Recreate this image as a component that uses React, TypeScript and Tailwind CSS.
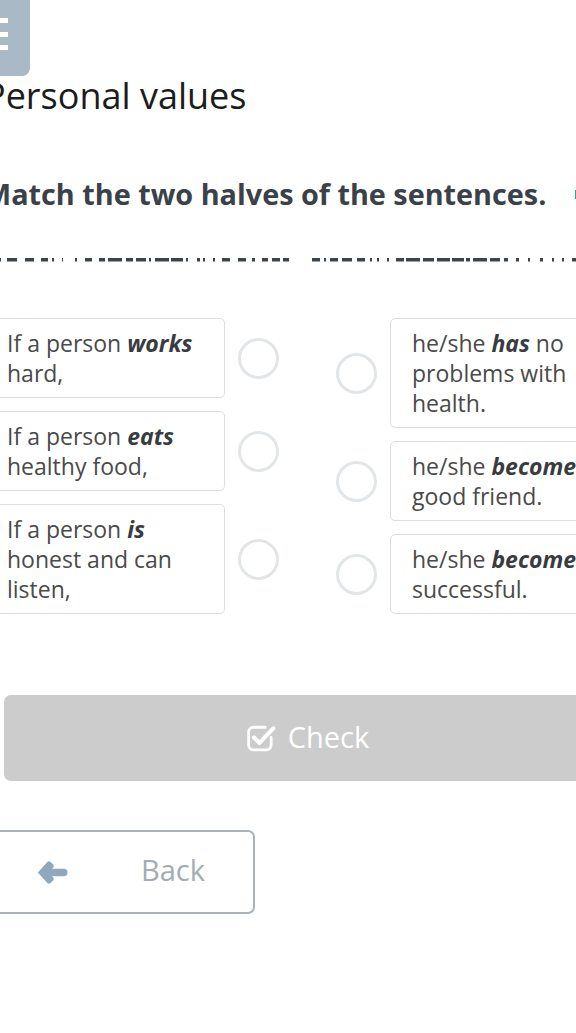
// dash segments of the dotted rule under the task, [start, end] in px
const dashes: [number, number][] = [
  [0, 1], [7, 17], [25, 34], [41, 48], [52, 54], [62, 63], [75, 77], [85, 92],
  [99, 105], [108, 122], [126, 133], [136, 146], [149, 151], [155, 169],
  [171, 183], [186, 188], [197, 200], [203, 205], [213, 215], [222, 230],
  [238, 246], [252, 255], [262, 268], [272, 280], [283, 289],
  [312, 320], [324, 326], [330, 338], [342, 352], [357, 365], [370, 372],
  [377, 379], [387, 389], [396, 404], [406, 420], [423, 434], [437, 450],
  [452, 464], [466, 470], [473, 487], [490, 500], [504, 508], [516, 519],
  [528, 530], [540, 543], [552, 554], [562, 564], [572, 576],
];

type Part = { text: string; bold?: boolean };

const leftItems: Part[][] = [
  [{ text: "If a person " }, { text: "works", bold: true }, { text: " hard," }],
  [{ text: "If a person " }, { text: "eats", bold: true }, { text: " healthy food," }],
  [{ text: "If a person " }, { text: "is", bold: true }, { text: " honest and can listen," }],
];

const rightItems: Part[][] = [
  [{ text: "he/she " }, { text: "has", bold: true }, { text: " no problems with health." }],
  [{ text: "he/she " }, { text: "becomes", bold: true }, { text: " a good friend." }],
  [{ text: "he/she " }, { text: "becomes", bold: true }, { text: " successful." }],
];

function Sentence({ parts }: { parts: Part[] }) {
  return (
    <p>
      {parts.map((p, i) =>
        p.bold ? (
          <b key={i} className="font-bold italic text-[#383c40]">
            {p.text}
          </b>
        ) : (
          <span key={i}>{p.text}</span>
        )
      )}
    </p>
  );
}

function Card({ parts, width }: { parts: Part[]; width: string }) {
  return (
    <div
      className={`${width} shrink-0 rounded-[5px] border border-[#dcdfe2] px-[21px] py-[9px] text-[23px] leading-[30px] text-[#4a4a4a]`}
    >
      <Sentence parts={parts} />
    </div>
  );
}

function Radio() {
  return (
    <div className="h-[41px] w-[41px] shrink-0 rounded-full border-[3.5px] border-[#e3e6e8] bg-white" />
  );
}

function CheckSquareIcon() {
  return (
    <svg width="29" height="28" viewBox="0 0 27 26" fill="none">
      <path
        d="M17 3H6A4.5 4.5 0 0 0 1.5 7.5v12A4.5 4.5 0 0 0 6 24h12A4.5 4.5 0 0 0 22.5 19.5v-7"
        stroke="white"
        strokeWidth="2.6"
        strokeLinecap="round"
      />
      <path
        d="M6.5 12.5l5 5L24.5 4"
        stroke="white"
        strokeWidth="3.8"
        strokeLinecap="round"
        strokeLinejoin="round"
      />
    </svg>
  );
}

function ArrowLeftIcon() {
  return (
    <svg width="31" height="25" viewBox="0 0 30 24" fill="#90a8bb">
      <path d="M0.8 12 L10 1.8 Q11.6 0.2 13.2 1.8 L15.6 4.2 Q17.2 5.8 15.6 7.4 L14.2 8.3 H26 Q29.5 8.3 29.5 12 Q29.5 15.7 26 15.7 H14.2 L15.6 16.6 Q17.2 18.2 15.6 19.8 L13.2 22.2 Q11.6 23.8 10 22.2 Z" />
    </svg>
  );
}

export default function App() {
  return (
    <div className="relative min-h-[1033px] w-[576px] overflow-hidden bg-white font-['Open_Sans','Liberation_Sans',sans-serif]">
      {/* Menu toggle */}
      <div className="-ml-[36px] flex h-[76px] w-[66px] flex-col gap-[8.5px] rounded-b-[8px] bg-[#a9b9c5] pl-[22px] pt-[18px]">
        <span className="h-[5px] w-[22px] bg-white" />
        <span className="h-[5px] w-[22px] bg-white" />
        <span className="h-[5px] w-[22px] bg-white" />
      </div>

      <div className="-ml-[15px] w-[646px]">
        <h1 className="-ml-[1px] whitespace-nowrap text-[36px] leading-[40px] font-normal text-[#1c1c1c]">
          Personal values
        </h1>

        <div className="mt-[59px] flex items-center whitespace-nowrap">
          <h2 className="-ml-[1px] text-[28.8px] leading-[38px] font-bold text-[#3b4149]">
            Match the two halves of the sentences.
          </h2>
          <span className="ml-[29px] h-[9px] w-[3px] bg-[#3d9a8e]" />
        </div>
      </div>

      {/* dotted rule */}
      <svg className="mt-[45px] block" width="576" height="4" viewBox="0 0 576 4">
        {dashes.map(([a, b], i) => (
          <rect key={i} x={a} y="0" width={b - a} height="3.5" fill="#3d434b" />
        ))}
      </svg>

      <div className="-ml-[15px] w-[646px]">
        {/* Matching area */}
        <div className="mt-[56px] flex gap-[57px]">
          <div className="flex flex-col gap-[13px]">
            {leftItems.map((parts, i) => (
              <div key={i} className="flex items-center gap-[13px]">
                <Card parts={parts} width="w-[240px]" />
                <Radio />
              </div>
            ))}
          </div>
          <div className="flex flex-col gap-[13px]">
            {rightItems.map((parts, i) => (
              <div key={i} className="flex items-center gap-[13px]">
                <Radio />
                <Card parts={parts} width="w-[250px]" />
              </div>
            ))}
          </div>
        </div>

        {/* Check */}
        <button
          disabled
          className="ml-[19px] mt-[81px] flex h-[86px] w-[608px] items-center justify-center gap-[12px] rounded-[7px] bg-[#cccccc] text-[29px] text-white"
        >
          <CheckSquareIcon />
          <span className="-mt-[2px]">Check</span>
        </button>

        {/* Back */}
        <button className="mt-[49px] flex h-[84px] w-[270px] items-center rounded-[7px] border-2 border-[#a8b4bc] pl-[50px] text-[29px] text-[#a3adb5]">
          <ArrowLeftIcon />
          <span className="-mt-[4px] ml-[73px]">Back</span>
        </button>
      </div>
    </div>
  );
}
